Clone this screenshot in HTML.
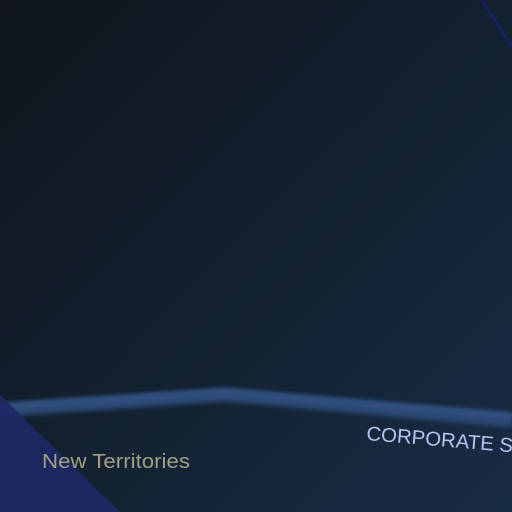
<!DOCTYPE html>
<html><head><meta charset="utf-8"><style>
html,body{margin:0;padding:0;width:512px;height:512px;overflow:hidden;background:#131c28}
svg{display:block}
</style></head><body>
<svg width="512" height="512" viewBox="0 0 512 512" xmlns="http://www.w3.org/2000/svg">
<defs>
<linearGradient id="bg" x1="0" y1="0" x2="1" y2="1">
<stop offset="0" stop-color="#0f141d"/>
<stop offset="0.5" stop-color="#132130"/>
<stop offset="1" stop-color="#182c44"/>
</linearGradient>
<filter id="bl" x="-5%" y="-50%" width="110%" height="200%"><feGaussianBlur stdDeviation="2.2"/></filter>
</defs>
<rect width="512" height="512" fill="url(#bg)"/>
<line x1="482" y1="0" x2="512" y2="47" stroke="#1a1f8a" stroke-width="1.5"/>
<polyline points="-5,411 225,395 512,421" fill="none" stroke="#2c4672" stroke-width="13" filter="url(#bl)"/>
<polyline points="-5,407 225,392 512,416" fill="none" stroke="#30507f" stroke-width="7" filter="url(#bl)"/>
<polygon points="0,395 120,512 0,512" fill="#1e2866" opacity="0.9"/>
<text x="42" y="468" font-family="Liberation Sans, sans-serif" font-size="20" fill="#a29f82" textLength="148" lengthAdjust="spacingAndGlyphs">New Territories</text>
<text x="366" y="440" font-family="Liberation Sans, sans-serif" font-size="20" fill="#b7c2f0" textLength="147" lengthAdjust="spacingAndGlyphs" transform="rotate(4.8 366 440)">CORPORATE S</text>
</svg>
</body></html>
